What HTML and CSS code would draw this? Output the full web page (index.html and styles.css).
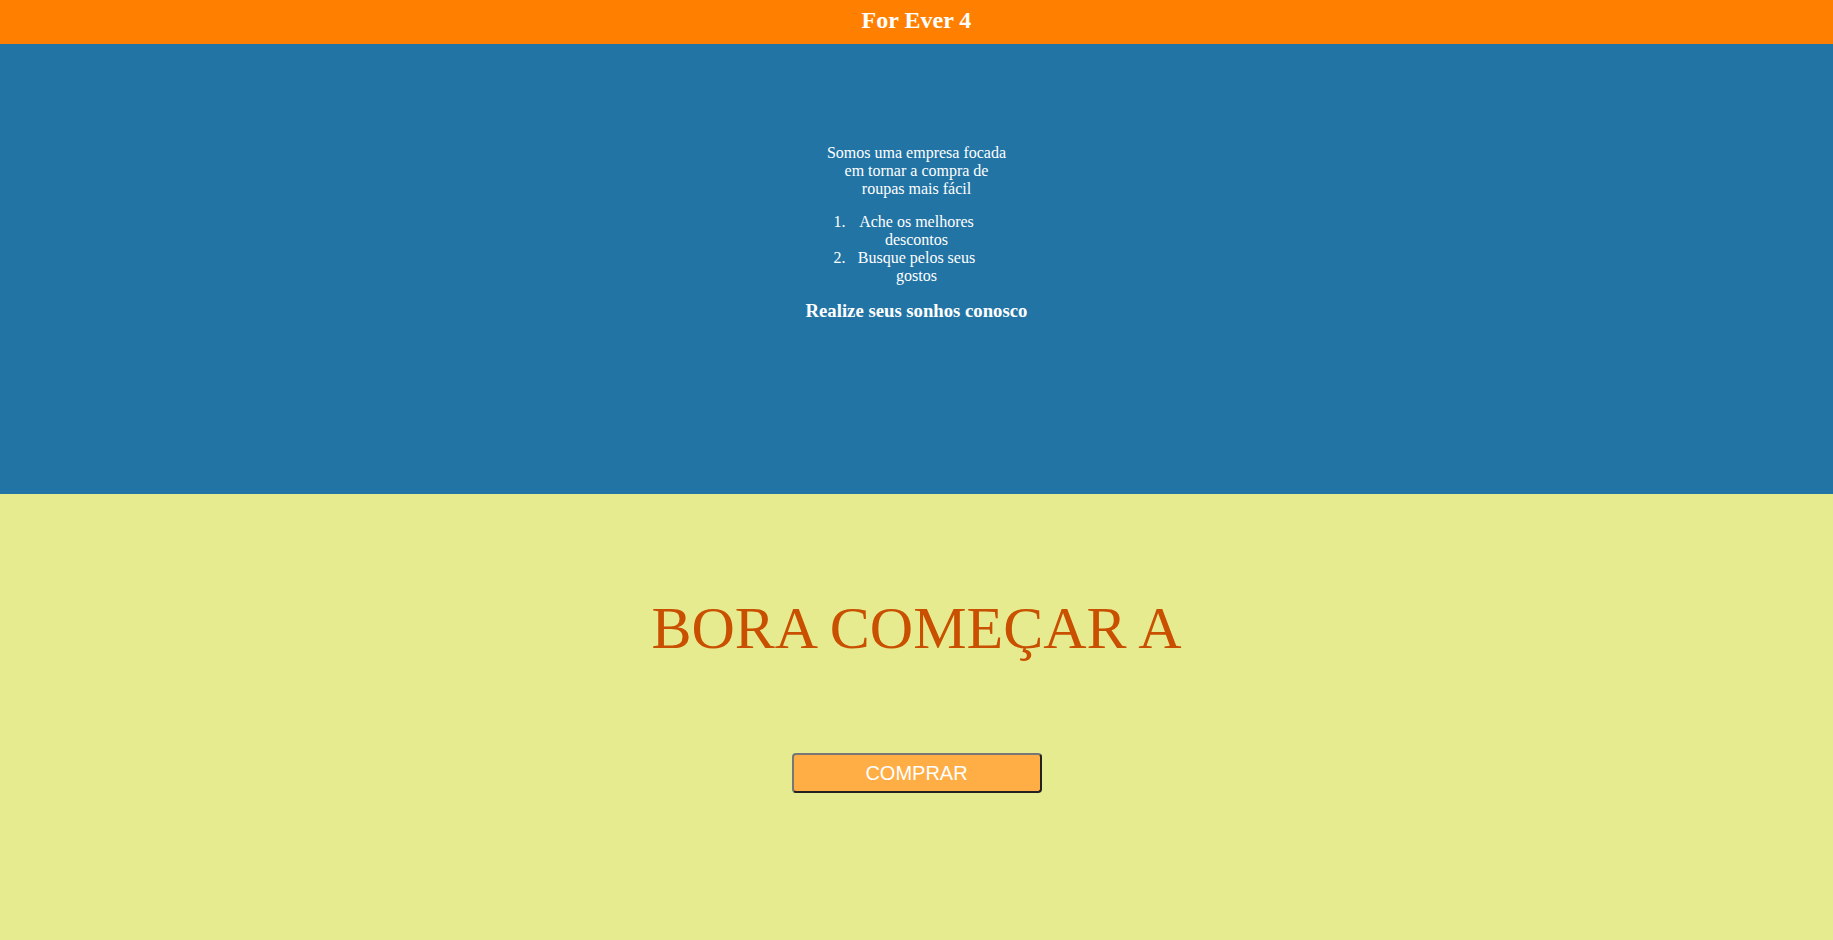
FILE: index.html
```html
<!DOCTYPE html>
<html lang="pt-BR">
<head>
<meta charset="utf-8">
<title>For Ever 4</title>
<link rel="stylesheet" href="styles.css">
</head>
<body>
<header class="topbar">
  <h1 class="brand">For Ever 4</h1>
</header>
<section class="about">
  <p class="about-text">Somos uma empresa focada em tornar a compra de roupas mais fácil</p>
  <ol class="about-list">
    <li>Ache os melhores descontos</li>
    <li>Busque pelos seus gostos</li>
  </ol>
  <h3 class="about-slogan">Realize seus sonhos conosco</h3>
</section>
<section class="start">
  <h2 class="start-title">BORA COMEÇAR A</h2>
  <button class="buy-btn" type="button">COMPRAR</button>
</section>
</body>
</html>
```

FILE: styles.css
```css
html, body {
  margin: 0;
  padding: 0;
}
body {
  font-family: "Liberation Serif", "Times New Roman", serif;
  background: #e7eb8f;
}
.topbar {
  height: 44px;
  box-sizing: border-box;
  padding-top: 7px;
  background: #ff7f00;
  text-align: center;
}
.brand {
  margin: 0;
  font-size: 24px;
  font-weight: bold;
  color: #ffffff;
}
.about {
  height: 450px;
  box-sizing: border-box;
  padding-top: 100px;
  background: #2274a5;
  color: #ffffff;
  display: flex;
  flex-direction: column;
  align-items: center;
  text-align: center;
}
.about-text {
  width: 190px;
  margin: 0;
  font-size: 16px;
}
.about-list {
  width: 134px;
  margin: 15px 0 0 0;
  padding: 0;
  font-size: 16px;
}
.about-slogan {
  margin: 15px 0 0 0;
  font-size: 18.72px;
  font-weight: bold;
}
.start {
  display: flex;
  flex-direction: column;
  align-items: center;
  padding-top: 100px;
  height: 446px;
  box-sizing: border-box;
}
.start-title {
  margin: 0;
  font-size: 60px;
  font-weight: normal;
  color: #c85000;
}
.buy-btn {
  margin-top: 90px;
  width: 250px;
  height: 40px;
  box-sizing: border-box;
  border-width: 2px;
  border-style: solid;
  border-color: #777777 #222222 #222222 #777777;
  border-radius: 4px;
  background: #ffad45;
  color: #ffffff;
  font-family: "Liberation Sans", Arial, sans-serif;
  font-size: 20px;
  padding: 0;
  cursor: pointer;
}
```
